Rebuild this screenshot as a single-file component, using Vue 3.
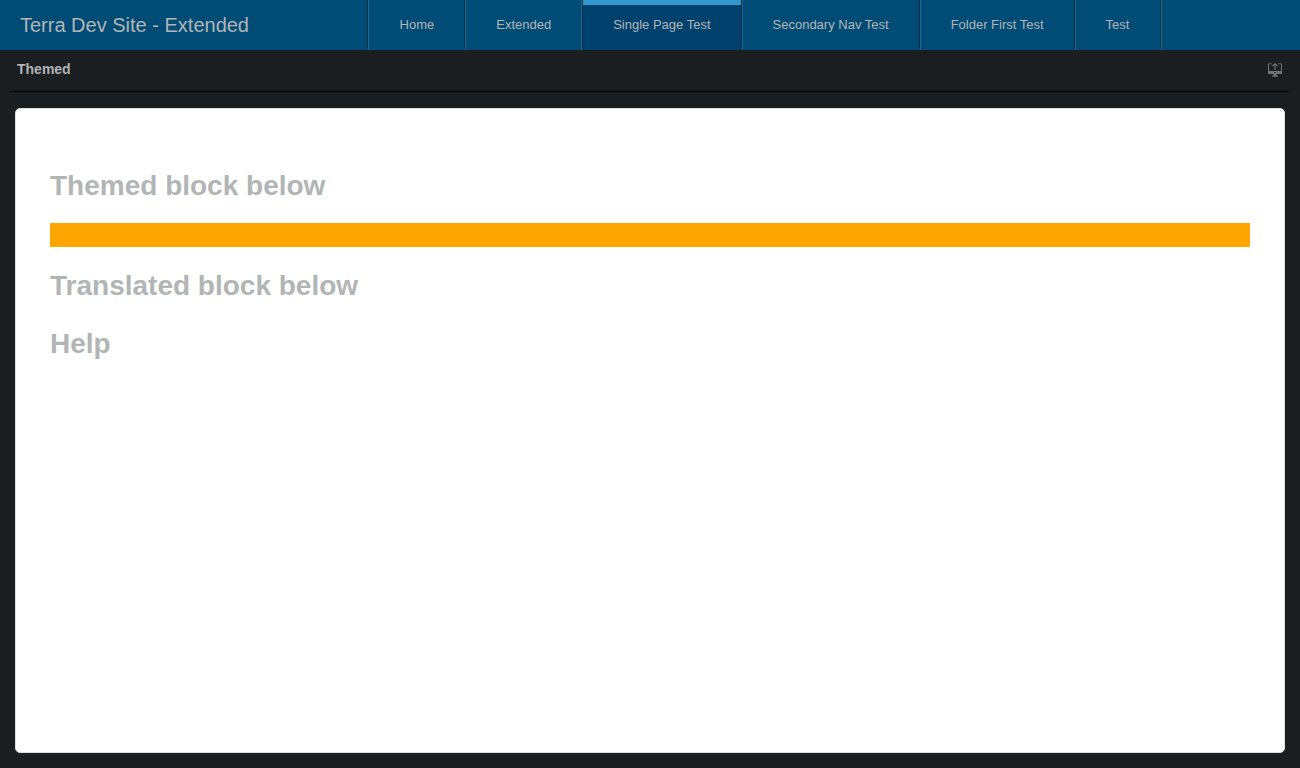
<script setup>
const tabs = ['Home', 'Extended', 'Single Page Test', 'Secondary Nav Test', 'Folder First Test', 'Test']
const active = 'Single Page Test'
</script>

<template>
  <div class="app">
    <header class="header">
      <div class="title">Terra Dev Site - Extended</div>
      <nav class="nav">
        <div class="tabs">
          <a
            v-for="tab in tabs"
            :key="tab"
            href="#"
            class="tab"
            :class="{ active: tab === active }"
            :aria-current="tab === active ? 'page' : null"
          >{{ tab }}</a>
        </div>
      </nav>
    </header>
    <div class="toolbar">
      <h1 class="page-title">Themed</h1>
      <button class="launch" type="button" aria-label="Open in modal">
        <svg viewBox="0 0 14 14" width="14" height="14" fill="currentColor" aria-hidden="true">
          <path d="M0 0.500h4v.8H1V8h12V1.300h-3V.5h4V11H0zM6.300 9v1h1.400V9zM5.500 11h3v1.200L10 13v.7H4V13l1.500-.8z" fill-rule="evenodd" />
          <path d="M7 0l3 2.800-.7.8L7.600 2.200V7H6.400V2.200L4.700 3.600 4 2.800z" />
        </svg>
      </button>
    </div>
    <main class="card">
      <h2>Themed block below</h2>
      <div class="block"></div>
      <h2>Translated block below</h2>
      <h2>Help</h2>
    </main>
  </div>
</template>

<style>
body {
  background: #1a1e20;
}
</style>

<style scoped>
.app {
  display: flex;
  flex-direction: column;
  min-height: 100vh;
  background: #1a1e20;
  color: #b2b5b6;
  font-family: "Liberation Sans", Arial, sans-serif;
}
.header {
  display: flex;
  align-items: stretch;
  height: 50px;
  padding-right: 40px;
  background: #004c76;
}
.title {
  padding: 0 20px;
  font-size: 20px;
  line-height: 50px;
  white-space: nowrap;
}
.nav {
  display: flex;
  flex: 1;
  justify-content: center;
}
.tabs {
  display: flex;
  border-left: 1px solid #0c2e3f;
  border-right: 1px solid #1a6a94;
}
.tab {
  padding: 0 30px;
  border-left: 1px solid #1a6a94;
  border-right: 1px solid #0c2e3f;
  color: inherit;
  font-size: 13px;
  line-height: 50px;
  text-decoration: none;
  white-space: nowrap;
}
.tab:first-child {
  padding-left: 31px;
}
.tab:last-child {
  padding-right: 31px;
}
.tab:has(+ .active) {
  border-right-color: #1a6a94;
}
.tab.active {
  border-left-color: #0c2e3f;
  background: linear-gradient(#3496cf 5px, #00426d 5px);
  background-clip: padding-box;
}
.toolbar {
  display: flex;
  align-items: center;
  justify-content: space-between;
  height: 41px;
  margin: 0 10px;
  padding: 0 8px 0 7px;
  border-bottom: 1px solid #000;
}
.page-title {
  margin: 0;
  padding-bottom: 4px;
  font-size: 14px;
  line-height: 18px;
}
.launch {
  display: flex;
  padding: 0 0 2px;
  border: 0;
  background: none;
  color: #6f7477;
}
.card {
  flex: 1;
  box-sizing: border-box;
  margin: 16px 15px 15px;
  padding: 38px 34px;
  border: 1px solid #dedfe0;
  border-radius: 5px;
  background: #fff;
}
h2 {
  margin: 20px 0 18px;
  font-size: 28px;
  line-height: 38px;
}
.block {
  height: 24px;
  background: orange;
}
</style>
